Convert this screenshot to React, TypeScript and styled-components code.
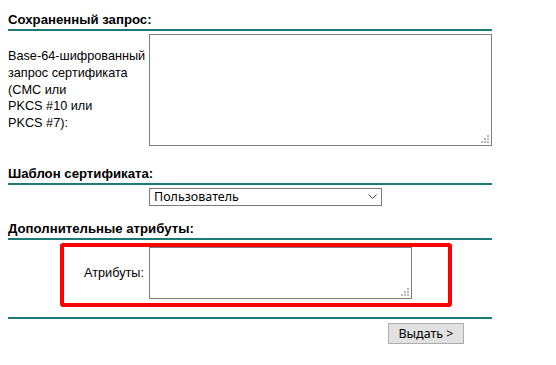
import React from "react";
import styled, { createGlobalStyle } from "styled-components";

const Global = createGlobalStyle`
  html, body { margin: 0; padding: 0; background: #fff; }
  body { font-family: "Liberation Sans", Arial, sans-serif; color: #000; }
`;

const Page = styled.div`
  width: 484px;
  padding: 12px 0 0 8px;
  display: flex;
  flex-direction: column;
`;

const Heading = styled.div<{ $top: number }>`
  margin-top: ${(p) => p.$top}px;
  font-weight: bold;
  font-size: 13.2px;
  line-height: 15px;
  padding-bottom: 2px;
  border-bottom: 2px solid #1c7a76;
`;

const Row = styled.div<{ $top: number }>`
  margin-top: ${(p) => p.$top}px;
  display: grid;
  grid-template-columns: 141px auto;
  justify-content: start;
  align-items: center;
  position: relative;
`;

const Label = styled.div<{ $right?: boolean }>`
  font-size: 12.7px;
  line-height: 16.67px;
  white-space: nowrap;
  text-align: ${(p) => (p.$right ? "right" : "left")};
  padding-right: ${(p) => (p.$right ? "5px" : "0")};
`;

const AreaWrap = styled.div`
  position: relative;
  display: flex;
  justify-self: start;
`;

const Area = styled.textarea<{ $w: number; $h: number }>`
  box-sizing: border-box;
  width: ${(p) => p.$w}px;
  height: ${(p) => p.$h}px;
  border: 1px solid #7e7e7e;
  resize: none;
  margin: 0;
  padding: 2px;
  font-family: "Liberation Mono", monospace;
  outline: none;
`;

const Grip = styled.svg`
  position: absolute;
  right: 3px;
  bottom: 3px;
  width: 8px;
  height: 8px;
`;

const SelectWrap = styled.div`
  position: relative;
  display: flex;
  width: 233px;
`;

const Select = styled.select`
  box-sizing: border-box;
  appearance: none;
  width: 233px;
  height: 18px;
  margin: 0;
  border: 1px solid #7a7a7a;
  background: #fff;
  padding: 0 0 0 4px;
  font-family: "Noto Sans", "Open Sans", sans-serif;
  font-size: 12.5px;
  line-height: 16px;
  color: #000;
  outline: none;
`;

const Chevron = styled.svg`
  position: absolute;
  right: 5px;
  top: 6px;
  width: 9px;
  height: 6px;
  pointer-events: none;
`;

const Highlight = styled.div`
  position: absolute;
  left: 52px;
  top: -4px;
  width: 392px;
  height: 64px;
  box-sizing: border-box;
  border: 4px solid #ff0000;
  border-radius: 3px;
  pointer-events: none;
`;

const Rule = styled.div`
  margin-top: 18px;
  height: 2px;
  background: #1c7a76;
`;

const Actions = styled.div`
  display: flex;
  padding: 4px 0 0 380px;
`;

const Button = styled.button`
  box-sizing: border-box;
  width: 76px;
  height: 21px;
  margin: 0;
  padding: 0;
  background: #e1e1e1;
  border: 1px solid #adadad;
  font-family: "Noto Sans", "Open Sans", sans-serif;
  font-size: 12.5px;
  color: #000;
`;

const GripIcon = () => (
  <Grip viewBox="0 0 8 8">
    {[
      [6, 0],
      [3, 3],
      [6, 3],
      [0, 6],
      [3, 6],
      [6, 6],
    ].map(([x, y], i) => (
      <rect key={i} x={x} y={y} width="2" height="2" fill="#b8b8b8" />
    ))}
  </Grip>
);

export default function App() {
  return (
    <>
      <Global />
      <Page>
        <Heading $top={0}>Сохраненный запрос:</Heading>
        <Row $top={3}>
          <Label>
            Base-64-шифрованный
            <br />
            запрос сертификата
            <br />
            (CMC или
            <br />
            PKCS #10 или
            <br />
            PKCS #7):
          </Label>
          <AreaWrap>
            <Area $w={343} $h={112} />
            <GripIcon />
          </AreaWrap>
        </Row>
        <Heading $top={20}>Шаблон сертификата:</Heading>
        <Row $top={3}>
          <span />
          <SelectWrap>
            <Select defaultValue="user">
              <option value="user">Пользователь</option>
            </Select>
            <Chevron viewBox="0 0 9 6">
              <path d="M0.5 0.5 L4.5 4.5 L8.5 0.5" fill="none" stroke="#444" strokeWidth="1" />
            </Chevron>
          </SelectWrap>
        </Row>
        <Heading $top={15}>Дополнительные атрибуты:</Heading>
        <Row $top={7}>
          <Label $right>Атрибуты:</Label>
          <AreaWrap>
            <Area $w={263} $h={52} />
            <GripIcon />
          </AreaWrap>
          <Highlight />
        </Row>
        <Rule />
        <Actions>
          <Button>Выдать &gt;</Button>
        </Actions>
      </Page>
    </>
  );
}
